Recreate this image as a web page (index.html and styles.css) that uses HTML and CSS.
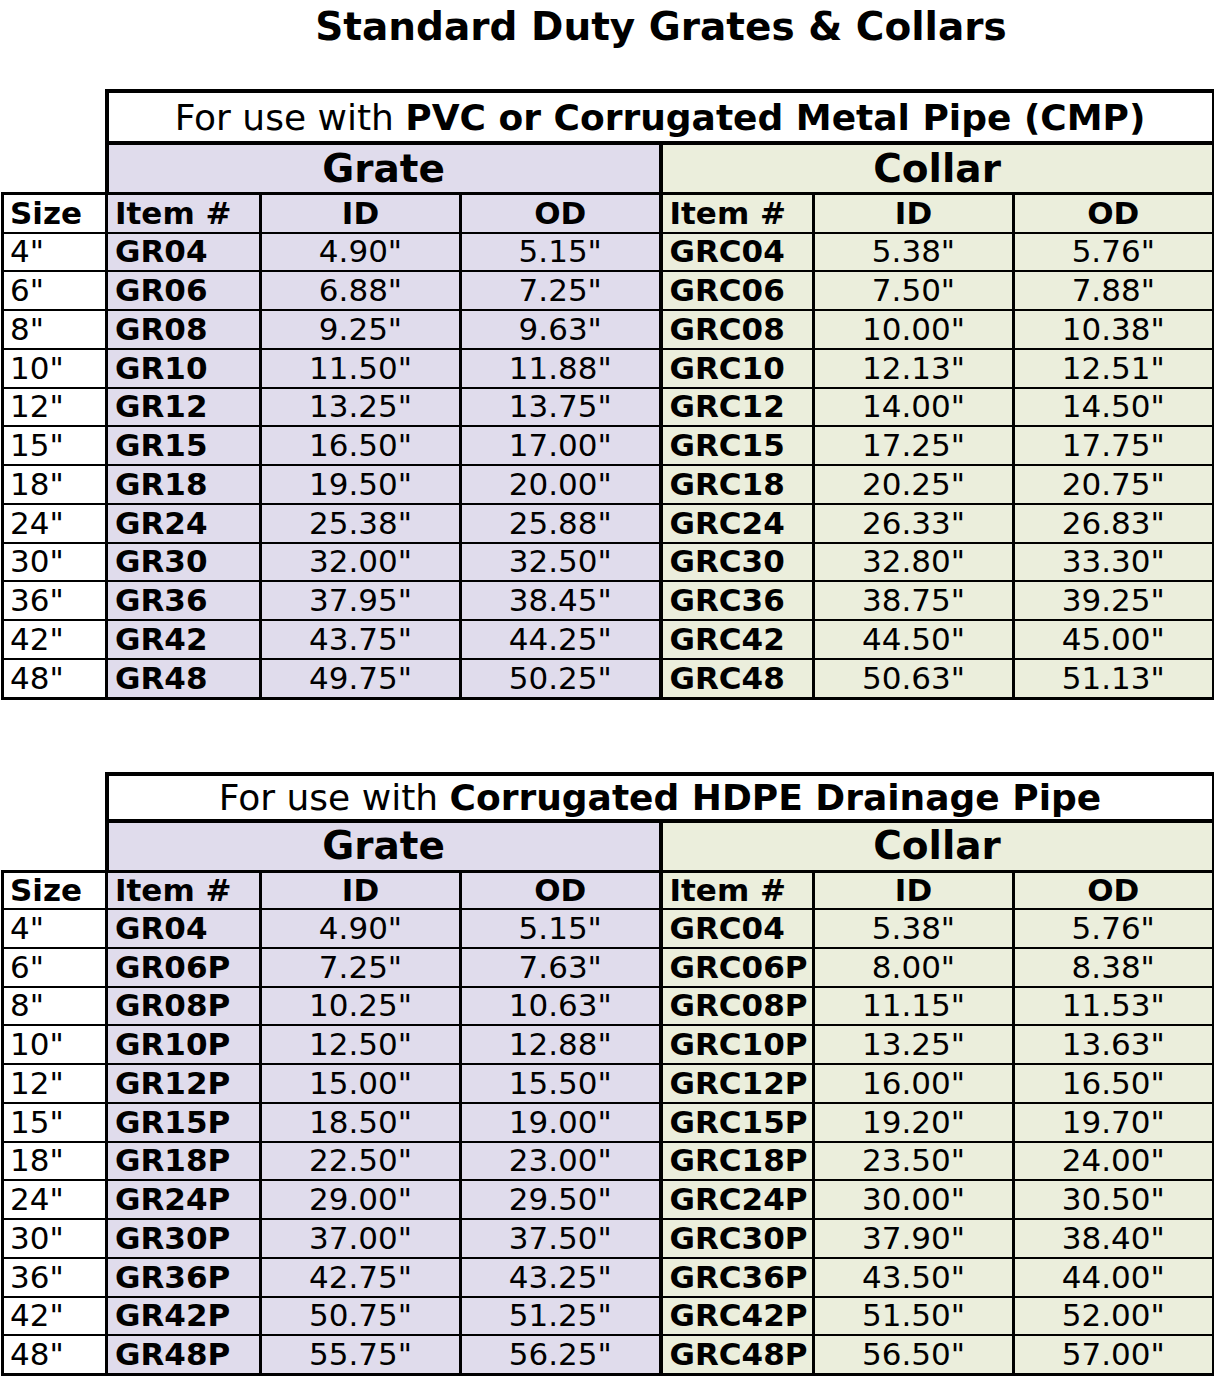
FILE: index.html
```html
<!DOCTYPE html>
<html>
<head>
<meta charset="utf-8">
<link rel="stylesheet" href="styles.css">
</head>
<body>
<h1 class="title">Standard Duty Grates &amp; Collars</h1>

<table class="spec">
  <colgroup>
    <col class="c-size"><col class="c-item"><col class="c-num"><col class="c-num">
    <col class="c-item2"><col class="c-num"><col class="c-num-last">
  </colgroup>
  <tr class="r-use">
    <td class="blank" rowspan="2"></td>
    <td class="use" colspan="6">For use with <b>PVC or Corrugated Metal Pipe (CMP)</b></td>
  </tr>
  <tr class="r-group">
    <td class="grp grate" colspan="3">Grate</td>
    <td class="grp collar" colspan="3">Collar</td>
  </tr>
  <tr class="r-head">
    <td class="size">Size</td>
    <td class="item grate">Item #</td>
    <td class="num grate">ID</td>
    <td class="num grate">OD</td>
    <td class="item collar cstart">Item #</td>
    <td class="num collar">ID</td>
    <td class="num collar last">OD</td>
  </tr>
  <tr><td class="size">4"</td><td class="item grate">GR04</td><td class="num grate">4.90"</td><td class="num grate">5.15"</td><td class="item collar cstart">GRC04</td><td class="num collar">5.38"</td><td class="num collar last">5.76"</td></tr>
  <tr><td class="size">6"</td><td class="item grate">GR06</td><td class="num grate">6.88"</td><td class="num grate">7.25"</td><td class="item collar cstart">GRC06</td><td class="num collar">7.50"</td><td class="num collar last">7.88"</td></tr>
  <tr><td class="size">8"</td><td class="item grate">GR08</td><td class="num grate">9.25"</td><td class="num grate">9.63"</td><td class="item collar cstart">GRC08</td><td class="num collar">10.00"</td><td class="num collar last">10.38"</td></tr>
  <tr><td class="size">10"</td><td class="item grate">GR10</td><td class="num grate">11.50"</td><td class="num grate">11.88"</td><td class="item collar cstart">GRC10</td><td class="num collar">12.13"</td><td class="num collar last">12.51"</td></tr>
  <tr><td class="size">12"</td><td class="item grate">GR12</td><td class="num grate">13.25"</td><td class="num grate">13.75"</td><td class="item collar cstart">GRC12</td><td class="num collar">14.00"</td><td class="num collar last">14.50"</td></tr>
  <tr><td class="size">15"</td><td class="item grate">GR15</td><td class="num grate">16.50"</td><td class="num grate">17.00"</td><td class="item collar cstart">GRC15</td><td class="num collar">17.25"</td><td class="num collar last">17.75"</td></tr>
  <tr><td class="size">18"</td><td class="item grate">GR18</td><td class="num grate">19.50"</td><td class="num grate">20.00"</td><td class="item collar cstart">GRC18</td><td class="num collar">20.25"</td><td class="num collar last">20.75"</td></tr>
  <tr><td class="size">24"</td><td class="item grate">GR24</td><td class="num grate">25.38"</td><td class="num grate">25.88"</td><td class="item collar cstart">GRC24</td><td class="num collar">26.33"</td><td class="num collar last">26.83"</td></tr>
  <tr><td class="size">30"</td><td class="item grate">GR30</td><td class="num grate">32.00"</td><td class="num grate">32.50"</td><td class="item collar cstart">GRC30</td><td class="num collar">32.80"</td><td class="num collar last">33.30"</td></tr>
  <tr><td class="size">36"</td><td class="item grate">GR36</td><td class="num grate">37.95"</td><td class="num grate">38.45"</td><td class="item collar cstart">GRC36</td><td class="num collar">38.75"</td><td class="num collar last">39.25"</td></tr>
  <tr><td class="size">42"</td><td class="item grate">GR42</td><td class="num grate">43.75"</td><td class="num grate">44.25"</td><td class="item collar cstart">GRC42</td><td class="num collar">44.50"</td><td class="num collar last">45.00"</td></tr>
  <tr class="r-last"><td class="size">48"</td><td class="item grate">GR48</td><td class="num grate">49.75"</td><td class="num grate">50.25"</td><td class="item collar cstart">GRC48</td><td class="num collar">50.63"</td><td class="num collar last">51.13"</td></tr>
</table>

<table class="spec second">
  <colgroup>
    <col class="c-size"><col class="c-item"><col class="c-num"><col class="c-num">
    <col class="c-item2"><col class="c-num"><col class="c-num-last">
  </colgroup>
  <tr class="r-use">
    <td class="blank" rowspan="2"></td>
    <td class="use" colspan="6">For use with <b>Corrugated HDPE Drainage Pipe</b></td>
  </tr>
  <tr class="r-group">
    <td class="grp grate" colspan="3">Grate</td>
    <td class="grp collar" colspan="3">Collar</td>
  </tr>
  <tr class="r-head">
    <td class="size">Size</td>
    <td class="item grate">Item #</td>
    <td class="num grate">ID</td>
    <td class="num grate">OD</td>
    <td class="item collar cstart">Item #</td>
    <td class="num collar">ID</td>
    <td class="num collar last">OD</td>
  </tr>
  <tr><td class="size">4"</td><td class="item grate">GR04</td><td class="num grate">4.90"</td><td class="num grate">5.15"</td><td class="item collar cstart">GRC04</td><td class="num collar">5.38"</td><td class="num collar last">5.76"</td></tr>
  <tr><td class="size">6"</td><td class="item grate">GR06P</td><td class="num grate">7.25"</td><td class="num grate">7.63"</td><td class="item collar cstart">GRC06P</td><td class="num collar">8.00"</td><td class="num collar last">8.38"</td></tr>
  <tr><td class="size">8"</td><td class="item grate">GR08P</td><td class="num grate">10.25"</td><td class="num grate">10.63"</td><td class="item collar cstart">GRC08P</td><td class="num collar">11.15"</td><td class="num collar last">11.53"</td></tr>
  <tr><td class="size">10"</td><td class="item grate">GR10P</td><td class="num grate">12.50"</td><td class="num grate">12.88"</td><td class="item collar cstart">GRC10P</td><td class="num collar">13.25"</td><td class="num collar last">13.63"</td></tr>
  <tr><td class="size">12"</td><td class="item grate">GR12P</td><td class="num grate">15.00"</td><td class="num grate">15.50"</td><td class="item collar cstart">GRC12P</td><td class="num collar">16.00"</td><td class="num collar last">16.50"</td></tr>
  <tr><td class="size">15"</td><td class="item grate">GR15P</td><td class="num grate">18.50"</td><td class="num grate">19.00"</td><td class="item collar cstart">GRC15P</td><td class="num collar">19.20"</td><td class="num collar last">19.70"</td></tr>
  <tr><td class="size">18"</td><td class="item grate">GR18P</td><td class="num grate">22.50"</td><td class="num grate">23.00"</td><td class="item collar cstart">GRC18P</td><td class="num collar">23.50"</td><td class="num collar last">24.00"</td></tr>
  <tr><td class="size">24"</td><td class="item grate">GR24P</td><td class="num grate">29.00"</td><td class="num grate">29.50"</td><td class="item collar cstart">GRC24P</td><td class="num collar">30.00"</td><td class="num collar last">30.50"</td></tr>
  <tr><td class="size">30"</td><td class="item grate">GR30P</td><td class="num grate">37.00"</td><td class="num grate">37.50"</td><td class="item collar cstart">GRC30P</td><td class="num collar">37.90"</td><td class="num collar last">38.40"</td></tr>
  <tr><td class="size">36"</td><td class="item grate">GR36P</td><td class="num grate">42.75"</td><td class="num grate">43.25"</td><td class="item collar cstart">GRC36P</td><td class="num collar">43.50"</td><td class="num collar last">44.00"</td></tr>
  <tr><td class="size">42"</td><td class="item grate">GR42P</td><td class="num grate">50.75"</td><td class="num grate">51.25"</td><td class="item collar cstart">GRC42P</td><td class="num collar">51.50"</td><td class="num collar last">52.00"</td></tr>
  <tr class="r-last"><td class="size">48"</td><td class="item grate">GR48P</td><td class="num grate">55.75"</td><td class="num grate">56.25"</td><td class="item collar cstart">GRC48P</td><td class="num collar">56.50"</td><td class="num collar last">57.00"</td></tr>
</table>
</body>
</html>
```

FILE: styles.css
```css
html, body {
  margin: 0;
  padding: 0;
  background: #ffffff;
}
body {
  font-family: "DejaVu Sans", Verdana, sans-serif;
  color: #000;
  width: 1214px;
}
.title {
  margin: 0;
  height: 89px;
  padding-top: 2px;
  box-sizing: border-box;
  text-align: center;
  font-size: 39px;
  line-height: 50px;
  font-weight: bold;
  padding-left: 108px;
}
.spec {
  width: 1211px;
  margin-left: 1px;
  border-collapse: collapse;
  table-layout: fixed;
}
.spec.second {
  margin-top: 72px;
}
.c-size { width: 104px; }
.c-item { width: 154px; }
.c-num { width: 200px; }
.c-item2 { width: 153px; }
.c-num-last { width: 200px; }

.spec td {
  padding: 0;
  white-space: nowrap;
  overflow: hidden;
  border: 2px solid #000;
  font-size: 31px;
  line-height: 35px;
  height: 36.75px;
}
.blank {
  border: none !important;
  border-right: 4px solid #000 !important;
}
.spec .r-use td.use {
  border: 4px solid #000;
  height: 46px;
  text-align: center;
  font-size: 36px;
  line-height: 42px;
  padding-top: 2px;
}
.spec.second .r-use td.use {
  height: 42px;
  line-height: 40px;
  padding-top: 1px;
}
.spec .r-group td.grp {
  border: 4px solid #000;
  border-bottom: 3px solid #000;
  height: 47px;
  text-align: center;
  font-weight: bold;
  font-size: 39px;
  line-height: 44px;
}
.spec .r-head td {
  height: 36.5px;
  font-weight: bold;
}
.spec.second .r-head td {
  height: 35.5px;
}
.grate { background: #e0dcec; }
.collar { background: #ebeedc; }
.size {
  border-left: 3px solid #000 !important;
  padding-left: 6px !important;
  text-align: left;
  background: #fff;
}
.r-head .size { border-top: 3px solid #000; }
.item {
  text-align: left;
  padding-left: 7px !important;
  font-weight: bold;
  border-left: 3px solid #000 !important;
}
.cstart { border-left: 4px solid #000 !important; }
.num {
  text-align: center;
  border-left: 3px solid #000 !important;
}
.last { border-right: 4px solid #000 !important; }
.r-last td { border-bottom: 3px solid #000; }
```
